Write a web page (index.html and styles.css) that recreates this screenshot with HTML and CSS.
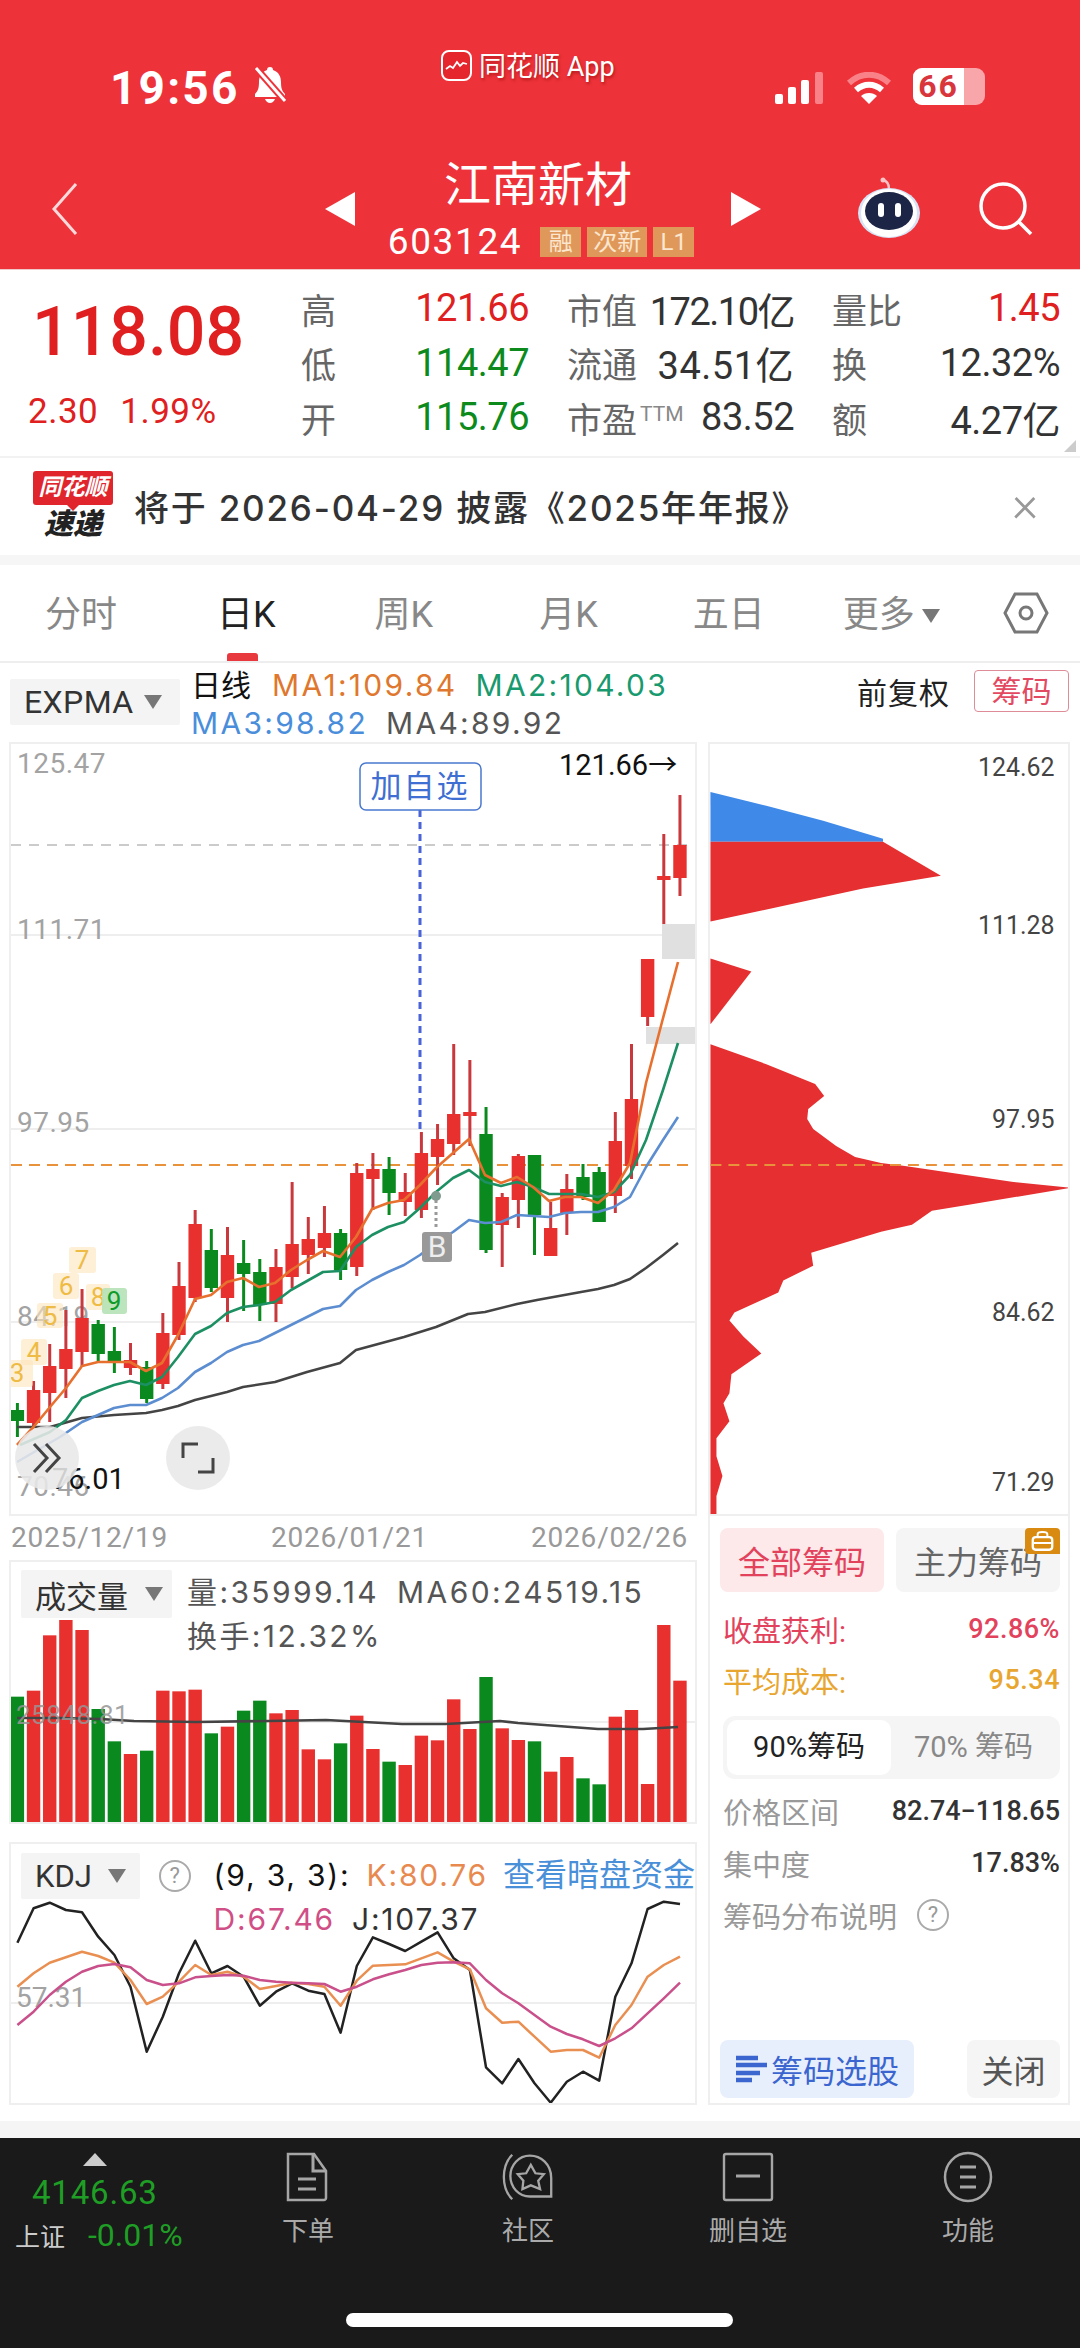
FILE: index.html
```html
<!DOCTYPE html>
<html lang="zh-CN">
<head>
  <meta charset="UTF-8" />
  <meta name="viewport" content="width=device-width, initial-scale=1.0"/>
  <title>江南新材</title>
  <link rel="stylesheet" href="styles.css">
</head>
<body>
  <header class="topbar">
    <div class="status">
      <div class="status-left">
        <span class="clock">19:56</span>
        <svg class="bell" viewBox="0 0 38 38"><path d="M19 2c-2 0-3 1-3 3-6 2-8 7-8 12 0 6-1 9-4 12v3h30v-3c-3-3-4-6-4-12 0-5-2-10-8-12 0-2-1-3-3-3z" fill="#fff"/><path d="M14 34c1 2.500 3 4 5 4s4-1.500 5-4z" fill="#fff"/><path d="M5 3l29 33" stroke="#ee3239" stroke-width="7"/><path d="M5 3l29 33" stroke="#fff" stroke-width="3"/></svg>
      </div>
      <div class="app-back">
        <svg class="app-logo" viewBox="0 0 31 31"><rect x="1" y="1" width="29" height="29" rx="7" fill="#e5262c" stroke="#fff" stroke-width="2"/><path d="M5 19l4-3 3 2 4-6 3 4 3-3 4 1" fill="none" stroke="#fff" stroke-width="1.800"/></svg>
        <span>同花顺 App</span>
      </div>
      <div class="status-right">
        <svg class="signal" viewBox="0 0 50 32"><rect x="0" y="22" width="8" height="10" rx="2" fill="#fff"/><rect x="13" y="15" width="8" height="17" rx="2" fill="#fff"/><rect x="26" y="8" width="8" height="24" rx="2" fill="#fff"/><rect x="40" y="0" width="8" height="32" rx="2" fill="#f98288"/></svg>
        <svg class="wifi" viewBox="0 0 46 32"><path d="M3 11c12-11 28-11 40 0" fill="none" stroke="#f98288" stroke-width="6"/><path d="M10 18c8-7 18-7 26 0" fill="none" stroke="#fff" stroke-width="6"/><path d="M23 32l-8-8c4-4 12-4 16 0z" fill="#fff"/></svg>
        <div class="battery"><span class="battery-level">66</span></div>
      </div>
    </div>
    <nav class="stock-nav">
      <svg class="back" viewBox="0 0 27 54"><path d="M25 2L3 27l22 25" fill="none" stroke="#fbd9da" stroke-width="3"/></svg>
      <div class="stock">
        <span class="arrow arrow-left"></span>
        <div class="stock-id">
          <h1>江南新材</h1>
          <div class="stock-code">
            <span>603124</span>
            <em class="tag">融</em><em class="tag">次新</em><em class="tag">L1</em>
          </div>
        </div>
        <span class="arrow arrow-right"></span>
      </div>
      <div class="nav-tools">
        <svg class="robot" viewBox="0 0 64 62"><path d="M32 12c0-5-2-8-6-9" fill="none" stroke="#f9c4c6" stroke-width="2.500"/><circle cx="26" cy="3" r="2.500" fill="#f9c4c6"/><ellipse cx="32" cy="36" rx="31" ry="25" fill="#d8e2f5"/><ellipse cx="32" cy="36" rx="28" ry="24" fill="#fff"/><ellipse cx="32" cy="34" rx="24" ry="19" fill="#1c2545"/><rect x="21" y="26" width="6" height="14" rx="3" fill="#fff"/><rect x="38" y="26" width="6" height="14" rx="3" fill="#fff"/></svg>
        <svg class="search" viewBox="0 0 56 54"><circle cx="25" cy="24" r="22" fill="none" stroke="#fff" stroke-width="3.500"/><path d="M41 40l12 12" stroke="#fff" stroke-width="3.500"/></svg>
      </div>
    </nav>
  </header>

  <section class="quote">
    <div class="price">
      <div class="price-now">118.08</div>
      <div class="price-change"><span>2.30</span><span>1.99%</span></div>
    </div>
    <div class="stats">
      <div class="stat"><label>高</label><b class="up">121.66</b></div>
      <div class="stat"><label>市值</label><b class="tight">172.10亿</b></div>
      <div class="stat"><label>量比</label><b class="up">1.45</b></div>
      <div class="stat"><label>低</label><b class="down">114.47</b></div>
      <div class="stat"><label>流通</label><b class="loose">34.51亿</b></div>
      <div class="stat"><label>换</label><b>12.32%</b></div>
      <div class="stat"><label>开</label><b class="down">115.76</b></div>
      <div class="stat"><label>市盈<small>TTM</small></label><b>83.52</b></div>
      <div class="stat"><label>额</label><b>4.27亿</b></div>
    </div>
    <span class="corner"></span>
  </section>

  <section class="notice">
    <div class="brand">
      <div class="brand-top">同花顺</div>
      <div class="brand-sub">速递</div>
    </div>
    <p>将于 2026-04-29 披露《2025年年报》</p>
    <span class="notice-close">×</span>
  </section>

  <div class="tabs">
    <span class="tab tab-a">分时</span>
    <span class="tab tab-b active">日K</span>
    <span class="tab tab-c">周K</span>
    <span class="tab tab-d">月K</span>
    <span class="tab tab-e">五日</span>
    <span class="tab tab-f">更多<i class="caret"></i></span>
    <svg class="hex" viewBox="0 0 46 42"><path d="M12 2h22l10 19-10 19H12L2 21z" fill="none" stroke="#777" stroke-width="3"/><circle cx="23" cy="21" r="6" fill="none" stroke="#777" stroke-width="3"/></svg>
  </div>

  <div class="legend">
    <div class="pill pill-expma">EXPMA<i class="caret"></i></div>
    <div class="legend-values">
      <div><span class="ma-day">日线</span><span class="c-ma1">MA1:109.84</span><span class="c-ma2">MA2:104.03</span></div>
      <div><span class="c-ma3">MA3:98.82</span><span class="c-ma4">MA4:89.92</span></div>
    </div>
    <div class="legend-right">
      <span>前复权</span>
      <button class="chip-btn">筹码</button>
    </div>
  </div>

  <main class="charts">
    <div class="col-left">
      <div class="panel panel-kline">
        <svg class="chart" viewBox="11 744 684 770">
          <line class="grid" x1="11" x2="695" y1="935" y2="935"/>
          <line class="grid" x1="11" x2="695" y1="1129" y2="1129"/>
          <line class="grid" x1="11" x2="695" y1="1322" y2="1322"/>
          <line class="grid-dash" x1="11" x2="695" y1="845" y2="845"/>
          <text class="axis" x="17" y="773">125.47</text>
          <text class="axis" x="17" y="939">111.71</text>
          <text class="axis" x="17" y="1132">97.95</text>
          <text class="axis" x="17" y="1326">84.19</text>
          <text class="axis" x="17" y="1496">70.46</text>
          <text class="mark" x="52" y="1489">76.01</text>
          <rect class="gap" x="662" y="924" width="34" height="35"/>
          <rect class="gap" x="646" y="1027" width="50" height="17"/>
          <line class="cost" x1="11" x2="695" y1="1165" y2="1165"/>
          <line class="watch" x1="420" x2="420" y1="810" y2="1132"/>
          <g id="candles"></g>
          <polyline class="ma ma4" points="17,1427 50,1427 82,1418 114,1415 146,1413 162,1410 178,1406 195,1400 227,1392 243,1387 275,1382 307,1372 340,1363 356,1350 404,1337 436,1327 468,1314 485,1312 517,1304 537,1300 581,1292 598,1289 614,1285 630,1279 646,1268 663,1255 678,1243"/>
          <polyline class="ma ma3" points="17,1462 60,1437 82,1422 98,1415 114,1408 130,1405 146,1405 162,1398 178,1388 195,1372 211,1363 227,1352 243,1345 259,1341 275,1333 291,1325 307,1317 323,1309 340,1306 356,1290 372,1280 388,1272 404,1265 420,1255 436,1243 453,1232 469,1220 485,1223 501,1222 517,1215 533,1216 549,1217 565,1213 581,1212 598,1212 614,1207 630,1197 646,1167 663,1140 678,1117"/>
          <polyline class="ma ma2" points="20,1445 50,1432 66,1420 82,1398 98,1391 114,1385 130,1381 146,1385 162,1377 178,1357 195,1334 211,1326 227,1313 243,1307 259,1305 275,1302 291,1290 307,1281 323,1272 340,1271 356,1247 372,1235 388,1227 404,1222 420,1208 436,1192 453,1178 469,1170 485,1182 501,1186 517,1182 533,1187 549,1194 565,1194 581,1194 598,1197 614,1192 630,1175 646,1140 663,1090 678,1043"/>
          <polyline class="ma ma1" points="17,1445 33.500,1427 50,1407 66,1388 82,1366 98,1362 114,1362 130,1362 146,1371 162,1363 178,1335 195,1299 211,1295 227,1282 243,1278 259,1287 275,1283 291,1270 307,1260 323,1251 340,1257 356,1237 372,1209 388,1203 404,1200 420,1185 436,1168 453,1153 469,1139 485,1175 501,1183 517,1177 533,1187 549,1201 565,1197 581,1197 598,1203 614,1190 630,1163 646,1083 662,1022 678,962"/>

          <g class="seq">
            <rect x="9" y="1360" width="24" height="27" rx="3"/><text x="17" y="1382">3</text>
            <rect x="21" y="1339" width="26" height="26" rx="3"/><text x="34" y="1361">4</text>
            <rect x="37" y="1303" width="26" height="25" rx="3"/><text x="50" y="1325">5</text>
            <rect x="53" y="1273" width="26" height="26" rx="3"/><text x="66" y="1295">6</text>
            <rect x="69" y="1247" width="27" height="26" rx="3"/><text x="82" y="1269">7</text>
            <rect x="86" y="1284" width="24" height="26" rx="3"/><text x="98" y="1306">8</text>
          </g>
          <g class="seq seq-end">
            <rect x="102" y="1288" width="25" height="26" rx="3"/><text x="114" y="1310">9</text>
          </g>

          <circle class="buy-dot" cx="436" cy="1196" r="5"/>
          <line class="buy-stem" x1="436" x2="436" y1="1200" y2="1230"/>
          <rect class="buy-box" x="422" y="1232" width="30" height="30" rx="3"/>
          <text class="buy-text" x="437" y="1257">B</text>

          <rect class="watch-box" x="360" y="763" width="121" height="47" rx="6"/>
          <text class="watch-text" x="420" y="797">加自选</text>
          <text class="mark" x="559" y="775">121.66→</text>

          <circle class="round-btn" cx="47" cy="1458" r="32"/>
          <path class="round-icon" d="M34 1444l13 14-13 14M46 1444l13 14-13 14"/>
          <circle class="round-btn" cx="198" cy="1458" r="32"/>
          <path class="round-icon" d="M183 1458v-14h15M213 1458v14h-15"/>
        </svg>
      </div>

      <div class="dates"><span>2025/12/19</span><span>2026/01/21</span><span>2026/02/26</span></div>

      <div class="panel panel-volume">
        <svg class="chart" viewBox="11 1562 684 260">
          <line class="grid" x1="11" x2="695" y1="1722" y2="1722"/>
          <g id="bars"></g>
          <polyline class="ma ma4" points="17,1718 60,1718 100,1719 134,1721 196,1722 268,1721 326,1720 402,1724 446,1724 500,1721 518,1723 571,1727 598,1729 643,1729 678,1727"/>
          <text class="axis axis-vol" x="16" y="1724">25848.81</text>
        </svg>
        <div class="panel-head">
          <div class="pill pill-vol">成交量<i class="caret"></i></div>
          <div class="head-text">
            <div><span>量:35999.14</span><span class="gap-left">MA60:24519.15</span></div>
            <div>换手:12.32%</div>
          </div>
        </div>
      </div>

      <div class="panel panel-kdj">
        <svg class="chart" viewBox="11 1844 684 259">
          <line class="grid" x1="11" x2="695" y1="2003" y2="2003"/>
          <text class="axis axis-kdj" x="16" y="2007">57.31</text>
          <g id="kdj"></g>
        </svg>
        <div class="panel-head">
          <div class="pill pill-kdj">KDJ<i class="caret"></i></div>
          <span class="help help-kdj">?</span>
          <div class="head-text kdj-text">
            <div><span class="kdj-params">(9, 3, 3):</span><span class="c-k">K:80.76</span><span class="c-link">查看暗盘资金</span></div>
            <div><span class="c-d">D:67.46</span><span class="c-j">J:107.37</span></div>
          </div>
        </div>
      </div>
    </div>

    <aside class="col-right">
      <svg class="chips" viewBox="709 744 358 772">
        <text class="chip-axis" x="1054" y="776">124.62</text>
        <text class="chip-axis" x="1054" y="935">111.28</text>
        <text class="chip-axis" x="1054" y="1129">97.95</text>
        <text class="chip-axis" x="1054" y="1323">84.62</text>
        <text class="chip-axis" x="1054" y="1493">71.29</text>
        <polygon class="chip-blue" points="709,792 765,806 822,821 882,839 882,842 709,842"/>
        <polygon class="chip-red" points="709,842 882,842 940,876 862,889 709,922"/>
        <polygon class="chip-red" points="709,959 750,972 709,1025"/>
        <polygon class="chip-red" points="709,1045 765,1065 814,1085 823,1097 807,1110 806,1120 812,1130 835,1147 854,1158 880,1164 904,1167 1011,1183 1070,1189 968,1206 931,1212 911,1226 880,1233 810,1254 812,1267 782,1282 777,1294 733,1314 728,1322 742,1338 760,1355 730,1376 728,1395 722,1405 728,1423 715,1440 715,1458 721,1478 715,1498 715,1516 709,1516"/>
        <line class="cost" x1="709" x2="1067" y1="1166" y2="1166"/>
      </svg>
      <div class="chip-info">
        <div class="chip-tabs">
          <button class="ctab ctab-on">全部筹码</button>
          <button class="ctab">主力筹码</button>
          <span class="lock">
            <svg viewBox="0 0 36 26"><rect x="8" y="9" width="20" height="13" rx="3" fill="none" stroke="#fff" stroke-width="2.400"/><path d="M13 9V6c0-3 10-3 10 0v3M9 15h18" fill="none" stroke="#fff" stroke-width="2"/></svg>
          </span>
        </div>
        <div class="kv kv-red"><span>收盘获利:</span><b>92.86%</b></div>
        <div class="kv kv-gold"><span>平均成本:</span><b>95.34</b></div>
        <div class="range-tabs">
          <span class="rtab rtab-on">90%筹码</span>
          <span class="rtab">70% 筹码</span>
        </div>
        <div class="kv kv-plain"><span>价格区间</span><b>82.74−118.65</b></div>
        <div class="kv kv-plain"><span>集中度</span><b>17.83%</b></div>
        <div class="kv kv-plain kv-help"><span>筹码分布说明</span><span class="help">?</span></div>
        <div class="chip-actions">
          <button class="act act-pick">
            <svg viewBox="0 0 32 28"><path d="M1 3h22M1 10h32M1 18h24M1 25h16" stroke="#3b66cf" stroke-width="4.500"/></svg>
            筹码选股
          </button>
          <button class="act act-close">关闭</button>
        </div>
      </div>
    </aside>
  </main>

  <div class="band"></div>

  <footer class="dock">
    <div class="index">
      <span class="index-up"></span>
      <div class="index-val">4146.63</div>
      <div class="index-row"><span>上证</span><b>-0.01%</b></div>
    </div>
    <div class="dock-item">
      <svg viewBox="0 0 50 52"><path d="M3 3h26l12 17v27c0 1-1 2-2 2H3z" transform="translate(2 0)" fill="none" stroke="#a6a6a6" stroke-width="2.500"/><path d="M30 4v16h12M15 28h18M15 38h18" fill="none" stroke="#a6a6a6" stroke-width="3"/></svg>
      <span>下单</span>
    </div>
    <div class="dock-item">
      <svg viewBox="0 0 56 52"><path d="M11 50C-1 38-1 14 11 2" fill="none" stroke="#a6a6a6" stroke-width="2.500"/><path d="M30 3c12 0 23 9 23 24v20H30C18 47 9 37 9 25S18 3 30 3z" fill="none" stroke="#a6a6a6" stroke-width="2.500"/><path d="M31 13l5 9 9 1-6 7 2 9-10-4-9 4 1-9-6-7 9-1z" fill="none" stroke="#a6a6a6" stroke-width="2.500"/></svg>
      <span>社区</span>
    </div>
    <div class="dock-item">
      <svg viewBox="0 0 50 52"><rect x="0" y="3" width="50" height="46" rx="2" fill="none" stroke="#a6a6a6" stroke-width="2.500" transform="translate(1 0) scale(.96 1)"/><path d="M13 25h24" stroke="#a6a6a6" stroke-width="3"/></svg>
      <span>删自选</span>
    </div>
    <div class="dock-item">
      <svg viewBox="0 0 50 52"><ellipse cx="25" cy="26" rx="23" ry="24" fill="none" stroke="#a6a6a6" stroke-width="2.500"/><path d="M17 16h16M17 26h16M17 36h16" stroke="#a6a6a6" stroke-width="3"/></svg>
      <span>功能</span>
    </div>
    <div class="home-bar"></div>
  </footer>

  <script src="chart.js"></script>
</body>
</html>
```

FILE: styles.css
```css
:root {
  --red: #ee3239;
  --up: #e02020;
  --down: #0c8a1c;
  --ink: #333;
  --mute: #999;
  --wide: Inter, Roboto, "Noto Sans CJK SC", sans-serif;
}
* { box-sizing: border-box; }
html, body { margin: 0; padding: 0; }
body {
  width: 1080px;
  height: 2348px;
  overflow: hidden;
  background: #fff;
  color: var(--ink);
  font-family: Roboto, "Noto Sans CJK SC", sans-serif;
}
button { border: none; font-family: inherit; padding: 0; }

/* red header */
.topbar { background: var(--red); height: 270px; color: #fff; border-bottom: 1px solid #f0c9ca; }
.status { height: 160px; display: grid; grid-template-columns: 441px auto 1fr; }
.status-left { padding: 65px 0 0 110px; display: flex; align-items: flex-start; gap: 11px; }
.clock { font-size: 46px; font-weight: 700; line-height: 46px; letter-spacing: 2.200px; }
.bell { width: 38px; height: 38px; }
.app-back { padding-top: 50px; display: flex; align-items: flex-start; gap: 7px; font-size: 27px; line-height: 34px; color: #fff; text-shadow: 1px 2px 3px rgba(120,0,0,.5); white-space: nowrap; }
.app-logo { width: 31px; height: 31px; }
.status-right { padding: 68px 95px 0 0; display: flex; justify-content: flex-end; align-items: flex-start; gap: 21px; }
.signal { width: 50px; height: 32px; margin-top: 4px; }
.wifi { width: 46px; height: 32px; margin-top: 4px; }
.battery { width: 72px; height: 37px; border-radius: 9px; background: #f9a6aa; overflow: hidden; }
.battery-level { display: block; width: 71%; height: 37px; background: #fff; color: #d9353c; font-size: 32px; font-weight: 700; line-height: 37px; text-align: center; letter-spacing: 2px; }

.stock-nav { height: 109px; display: grid; grid-template-columns: 325px 436px 1fr; align-items: start; }
.back { width: 27px; height: 54px; margin: 22px 0 0 51px; }
.stock { display: flex; justify-content: space-between; align-items: flex-start; }
.arrow { width: 0; height: 0; border-top: 17px solid transparent; border-bottom: 17px solid transparent; margin-top: 32px; }
.arrow-left { border-right: 30px solid #fff; }
.arrow-right { border-left: 30px solid #fff; }
.stock-id { text-align: center; margin-right: 4px; }
.stock-id h1 { margin: 0 6px 0 0; font-size: 47px; font-weight: 400; line-height: 50px; }
.stock-code { display: flex; align-items: center; gap: 6px; font-size: 37px; line-height: 32px; margin-top: 16px; white-space: nowrap; letter-spacing: 1.600px; }
.stock-code span { margin-right: 12px; }
.tag { font-style: normal; font-size: 24px; letter-spacing: 0; line-height: 30px; height: 30px; min-width: 41px; padding: 0 6px; text-align: center; background: #e0985a; color: #fbe6cf; }
.nav-tools { display: flex; padding-left: 96px; gap: 57px; align-items: flex-start; }
.robot { width: 64px; height: 62px; margin-top: 17px; }
.search { width: 56px; height: 54px; margin-top: 22px; }

/* quote block */
.quote { position: relative; height: 188px; display: flex; border-bottom: 2px solid #f2f2f2; }
.price { width: 301px; padding: 26px 0 0 32px; color: var(--up); }
.price-now { font-size: 68px; line-height: 72px; font-weight: 500; }
.price-change { display: flex; gap: 22px; font-size: 35px; letter-spacing: .5px; line-height: 40px; margin: 24px 0 0 -4px; }
.stats { width: 759px; padding-top: 11px; display: grid; grid-template-columns: 228px 227px 228px; grid-auto-rows: 54.500px; column-gap: 38px; }
.stat { display: flex; justify-content: space-between; align-items: center; white-space: nowrap; }
.stat label { font-size: 35px; color: #666; }
.stat label small { font-size: 21px; color: #888; vertical-align: 12px; margin-left: 3px; }
.stat b { font-size: 38px; font-weight: 400; color: #333; letter-spacing: -.5px; }
.stat b.up { color: var(--up); }
.stat b.down { color: var(--down); }
.stat b.tight { letter-spacing: -1.500px; }
.stat b.loose { letter-spacing: .5px; }
.corner { position: absolute; right: 4px; bottom: 4px; width: 0; height: 0; border-left: 12px solid transparent; border-bottom: 12px solid #ccc; }

/* notice */
.notice { height: 97px; display: flex; align-items: center; padding: 0 0 0 33px; position: relative; }
.brand { width: 80px; text-align: center; margin-top: -4px; }
.brand-top { position: relative; background: #e0252c; color: #fff; font-size: 23px; font-style: italic; font-weight: 700; line-height: 34px; border-radius: 3px; }
.brand-top::after { content: ""; position: absolute; left: 33px; bottom: -6px; border-top: 7px solid #e0252c; border-left: 7px solid transparent; border-right: 7px solid transparent; }
.brand-sub { font-size: 29px; line-height: 28px; font-style: italic; font-weight: 900; color: #222; margin-top: 5px; }
.notice p { margin: -3px 0 0 21px; font-family: var(--wide); font-size: 35px; letter-spacing: 1.800px; color: #333; font-weight: 500; white-space: nowrap; }
.notice-close { position: absolute; left: 1012px; top: 16px; font-size: 50px; font-weight: 300; line-height: 60px; color: #999; }

/* tabs */
.tabs { height: 108px; border-top: 10px solid #f6f6f6; border-bottom: 2px solid #eee; position: relative; display: flex; font-size: 36px; color: #888; }
.tab { display: block; padding-top: 28px; line-height: 44px; white-space: nowrap; }
.tab-a { margin-left: 45px; }
.tab-b { margin-left: 100px; }
.tab-c { margin-left: 99px; }
.tab-d { margin-left: 106px; }
.tab-e { margin-left: 95px; }
.tab-f { margin-left: 78px; }
.tab.active { color: #222; position: relative; }
.tab.active::after { content: ""; position: absolute; left: 10px; top: 88px; width: 31px; height: 8px; border-radius: 3px 3px 0 0; background: #e8393f; }
.tab-f .caret { margin-left: 7px; vertical-align: 4px; }
.hex { width: 46px; height: 42px; position: absolute; left: 1003px; top: 27px; }

.caret { display: inline-block; width: 0; height: 0; border-top: 14px solid #777; border-left: 9px solid transparent; border-right: 9px solid transparent; }
.pill { background: #f4f4f4; display: flex; align-items: center; color: #333; border-radius: 2px; white-space: nowrap; }

/* legend above the chart */
.legend { height: 79px; display: flex; position: relative; font-family: var(--wide); font-size: 30px; letter-spacing: 2.300px; white-space: nowrap; }
.pill-expma { width: 170px; height: 46px; margin: 16px 0 0 10px; padding-left: 14px; font-family: Roboto, sans-serif; font-size: 32px; letter-spacing: .4px; gap: 10px; }
.legend-values { margin-left: 11px; padding-top: 3px; line-height: 38px; }
.ma-day { color: #111; margin-right: 21px; font-size: 30px; letter-spacing: 0; }
.c-ma1 { color: #e0772e; margin-right: 18px; }
.c-ma2 { color: #189a6e; }
.c-ma3 { color: #4a8edb; margin-right: 18px; }
.c-ma4 { color: #555; }
.legend-right { position: absolute; left: 857px; top: 6px; display: flex; align-items: center; gap: 24px; font-size: 30px; letter-spacing: 1px; color: #222; }
.chip-btn { width: 95px; height: 42px; background: #fff; border: 1.500px solid #dd8c98; border-radius: 4px; color: #e34a62; font-size: 30px; line-height: 38px; }

/* charts */
.charts { display: grid; grid-template-columns: 688px 362px; column-gap: 11px; padding-left: 9px; height: 1363px; }
.panel { position: relative; border: 2px solid #efefef; }
.panel-kline { height: 774px; }
.dates { height: 44px; display: flex; justify-content: space-between; padding: 0 9px 0 2px; font-size: 28px; line-height: 44px; color: var(--mute); letter-spacing: .8px; }
.panel-volume { height: 264px; }
.panel-kdj { height: 263px; margin-top: 18px; }
.chart { display: block; width: 684px; height: 100%; }
.panel-volume .chart, .panel-kdj .chart { position: absolute; left: 0; top: 0; }

.grid { stroke: #eee; stroke-width: 2; }
.grid-dash { stroke: #bbb; stroke-width: 1.500; stroke-dasharray: 10 8; }
.axis { font-size: 28px; fill: #a3a3a3; letter-spacing: .5px; }
.axis-vol { font-size: 26px; fill: rgba(150,150,150,.85); }
.axis-kdj { font-size: 28px; letter-spacing: 0; }
.mark { font-size: 29px; fill: #111; }
.gap { fill: #e0e0e0; }
.cost { stroke: #e8923c; stroke-width: 2; stroke-dasharray: 11 7; }
.watch { stroke: #4a63d6; stroke-width: 3; stroke-dasharray: 7 5; }
.ma { fill: none; stroke-width: 2.600; stroke-linejoin: round; }
.ma1 { stroke: #e8702e; }
.ma2 { stroke: #1c8f63; }
.ma3 { stroke: #5b8dd0; }
.ma4 { stroke: #444; }
.seq rect { fill: #fde4bd; opacity: .6; }
.seq text { font-size: 26px; fill: #eebb44; text-anchor: middle; }
.seq-end rect { fill: #b6e2b6; opacity: .9; }
.seq-end text { fill: #0f9a2a; }
.buy-dot { fill: #7f9a8f; }
.buy-stem { stroke: #999; stroke-width: 3; stroke-dasharray: 3 3; }
.buy-box { fill: #999; }
.buy-text { fill: #eee; font-size: 30px; text-anchor: middle; }
.watch-box { fill: #fff; stroke: #4a78cf; stroke-width: 1.500; }
.watch-text { fill: #3f6fd2; font-size: 31px; text-anchor: middle; letter-spacing: 2px; }
.round-btn { fill: rgba(232,232,232,.88); }
.round-icon { fill: none; stroke: #444; stroke-width: 3; }

.panel-head { position: relative; display: flex; align-items: flex-start; padding: 8px 0 0 10px; white-space: nowrap; }
.pill-vol { width: 151px; height: 48px; padding-left: 14px; font-size: 31px; gap: 17px; }
.head-text { margin-left: 15px; font-family: var(--wide); font-size: 30px; line-height: 44px; color: #555; letter-spacing: 2.400px; }
.gap-left { margin-left: 18px; }
.pill-kdj { width: 120px; height: 46px; padding-left: 14px; font-size: 31px; gap: 16px; }
.panel-kdj .panel-head { padding-top: 9px; }
.help { display: inline-block; width: 32px; height: 32px; border: 2px solid #aaa; border-radius: 50%; color: #999; text-align: center; font-size: 22px; line-height: 28px; letter-spacing: 0; }
.help-kdj { margin: 7px 0 0 19px; }
.kdj-text { margin-left: 23px; color: #111; letter-spacing: 1.800px; }
.kdj-params { margin-right: 16px; }
.c-k { color: #e88a50; margin-right: 15px; }
.c-link { color: #4a90d9; font-size: 32px; letter-spacing: 0; }
.c-d { color: #cf4f86; margin-right: 17px; }
.c-j { color: #333; }

/* chip side */
.col-right { border: 2px solid #efefef; height: 1363px; }
.chips { display: block; width: 358px; height: 772px; border-bottom: 2px solid #efefef; }
.chip-axis { font-size: 25px; fill: #444; text-anchor: end; }
.chip-blue { fill: #3f8ae8; }
.chip-red { fill: #e52f30; }
.chip-info { position: relative; padding: 12px 8px 0 10px; height: 589px; }
.chip-tabs { display: flex; gap: 12px; }
.ctab { width: 166px; height: 64px; border-radius: 8px; background: #f5f5f5; color: #666; font-size: 32px; }
.ctab-on { background: #fde8ea; color: #e2425c; }
.lock { position: absolute; left: 315px; top: 12px; width: 35px; height: 26px; background: #d98a10; border-radius: 4px 4px 0 4px; }
.lock svg { display: block; width: 35px; height: 26px; }
.kv { display: flex; justify-content: space-between; align-items: center; margin: 0 0 0 3px; font-size: 29px; height: 50px; }
.kv b { font-weight: 500; font-size: 27px; letter-spacing: .5px; }
.kv-red { color: #e2425c; margin-top: 12px; }
.kv-gold { color: #e8a630; margin-top: 1px; }
.range-tabs { display: flex; margin: 11px 0 0 3px; height: 63px; background: #f5f5f5; border-radius: 12px; padding: 4px; font-size: 29px; color: #888; }
.rtab { line-height: 55px; text-align: center; flex: 1; }
.rtab-on { flex: none; width: 164px; background: #fff; color: #222; border-radius: 10px; }
.kv-plain { color: var(--mute); margin-top: 11px; height: 42px; }
.kv-plain:nth-child(n+6) { margin-top: 10px; }
.kv-plain b { color: #333; letter-spacing: 0; }
.kv-help { justify-content: flex-start; gap: 20px; }
.chip-actions { position: absolute; left: 10px; right: 8px; bottom: 7px; display: flex; justify-content: space-between; }
.act { height: 58px; border-radius: 8px; font-size: 32px; display: flex; align-items: center; justify-content: center; }
.act-pick { width: 194px; background: #e8effc; color: #3b66cf; gap: 4px; }
.act-pick svg { width: 32px; height: 28px; }
.act-close { width: 93px; background: #f5f5f5; color: #555; }

/* bottom dock */
.band { height: 33px; background: linear-gradient(#fff 50%, #f5f5f5 50%); }
.dock { position: relative; height: 210px; background: #1a1a1a; display: grid; grid-template-columns: 198px repeat(4, 220px); align-items: start; color: #b4b4b4; }
.index { padding: 15px 0 0 15px; }
.index-up { display: block; width: 0; height: 0; margin-left: 68px; border-bottom: 13px solid #ccc; border-left: 12px solid transparent; border-right: 12px solid transparent; }
.index-val { font-size: 33px; letter-spacing: .8px; line-height: 38px; margin: 8px 0 0 17px; color: #1f9e25; }
.index-row { display: flex; align-items: center; gap: 23px; margin-top: 4px; font-size: 25px; color: #ccc; white-space: nowrap; }
.index-row b { font-weight: 400; font-size: 32px; color: #1f9e25; }
.dock-item { display: flex; flex-direction: column; align-items: center; padding-top: 13px; font-size: 26px; color: #aaa; }
.dock-item svg { width: 52px; height: 52px; }
.dock-item span { line-height: 32px; margin-top: 12px; }
.home-bar { position: absolute; left: 346px; top: 175px; width: 387px; height: 14px; border-radius: 7px; background: #fff; }
```

FILE: chart.js
```js
// kline + volume + kdj drawing, page coordinates are used as svg user units
const NS = "http://www.w3.org/2000/svg";
const X0 = 17.4;
const STEP = 16.16;
const RED = "#e8312f";
const GREEN = "#0a8a1e";

function el(name, attrs, parent) {
  const node = document.createElementNS(NS, name);
  for (const k in attrs) node.setAttribute(k, attrs[k]);
  parent.appendChild(node);
  return node;
}

const xAt = i => X0 + STEP * i;

// high, body top, body bottom, low, rising (1) or falling (0)
const candles = [
  [1403,1410,1421,1437,0],[1381,1390,1423,1427,1],[1344,1366,1393,1422,1],[1310,1349,1369,1398,1],
  [1289,1318,1352,1367,1],[1320,1324,1354,1363,0],[1327,1351,1361,1373,0],[1343,1360,1368,1375,1],
  [1361,1367,1399,1403,0],[1313,1333,1384,1389,1],[1262,1286,1335,1340,1],[1210,1224,1298,1302,1],
  [1229,1250,1288,1292,0],[1227,1255,1298,1322,1],[1240,1263,1274,1311,0],[1259,1272,1305,1321,0],
  [1249,1267,1304,1322,1],[1182,1244,1277,1288,1],[1217,1239,1255,1274,1],[1206,1233,1248,1257,1],
  [1229,1233,1270,1280,0],[1163,1173,1267,1276,1],[1153,1169,1179,1210,1],[1157,1169,1193,1215,0],
  [1173,1192,1202,1216,1],[1132,1153,1210,1218,1],[1124,1139,1157,1185,1],[1044,1114,1144,1155,1],
  [1060,1112,1116,1146,1],[1107,1134,1250,1253,0],[1193,1197,1225,1267,1],[1154,1156,1200,1228,1],
  [1155,1155,1215,1255,0],[1202,1228,1256,1256,1],[1174,1189,1213,1235,1],[1164,1177,1197,1200,0],
  [1167,1172,1222,1222,0],[1112,1141,1196,1213,1],[1044,1099,1166,1179,1],[959,959,1017,1026,1],
  [834,876,880,924,1],[795,845,878,896,1]
];

const candleLayer = document.getElementById("candles");
candles.forEach((c, i) => {
  const x = xAt(i);
  const color = c[4] ? RED : GREEN;
  el("line", { x1: x, x2: x, y1: c[0], y2: c[3], stroke: c[4] ? "#c8383c" : GREEN, "stroke-width": 3 }, candleLayer);
  el("rect", { x: x - 6.7, y: c[1], width: 13.4, height: c[2] - c[1], fill: color }, candleLayer);
});

// bar tops, measured on a 3x crop of the volume panel
const volTops = [500,482,316,270,300,537,634,672,662,482,484,479,610,590,542,512,550,540,658,688,640,557,657,695,705,617,631,508,597,441,595,630,634,725,681,745,763,560,540,762,285,452];
const volUp = [0,1,1,1,1,0,0,1,0,1,1,1,0,1,0,0,1,1,1,1,0,1,1,0,1,1,1,1,1,0,1,1,0,1,1,0,0,1,1,1,1,1];

const barLayer = document.getElementById("bars");
volTops.forEach((t, i) => {
  const y = 1530 + t / 3;
  el("rect", { x: xAt(i) - 6.7, y: y, width: 13.4, height: 1823 - y, fill: volUp[i] ? RED : GREEN }, barLayer);
});

const kdj = {
  "#222": [338,235,218,240,247,320,375,470,665,560,430,332,430,408,440,527,485,460,482,492,608,408,322,342,363,335,307,385,420,712,760,687,760,818,755,725,752,500,400,237,215,222],
  "#e98f52": [470,430,398,382,365,378,398,450,522,500,455,405,435,425,440,477,468,458,462,470,527,452,407,405,403,385,367,395,418,535,578,575,620,665,660,660,683,585,525,440,405,380],
  "#c9508a": [585,545,495,455,425,408,402,412,450,465,460,442,438,435,437,450,455,458,460,462,485,470,448,433,420,405,398,397,400,450,490,520,555,590,612,628,648,625,595,550,505,458]
};

const kdjLayer = document.getElementById("kdj");
Object.keys(kdj).forEach(color => {
  const points = kdj[color].map((z, i) => xAt(i).toFixed(1) + "," + (1830 + z / 3).toFixed(1)).join(" ");
  el("polyline", { points: points, fill: "none", stroke: color, "stroke-width": 2.5, "stroke-linejoin": "round" }, kdjLayer);
});
```
